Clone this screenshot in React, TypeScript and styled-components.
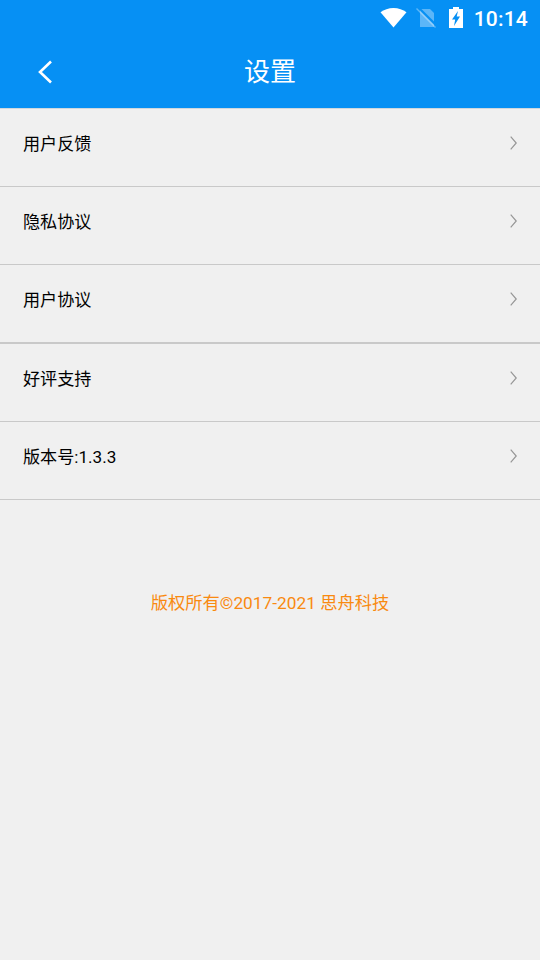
import styled, { createGlobalStyle } from "styled-components";

const GlobalStyle = createGlobalStyle`
  html, body {
    margin: 0;
    padding: 0;
    background: #f0f0f0;
  }
  * {
    box-sizing: border-box;
  }
`;

const Page = styled.div`
  width: 540px;
  height: 960px;
  overflow: hidden;
  background: #f0f0f0;
  font-family: Roboto, "Noto Sans CJK SC", sans-serif;
`;

const TopArea = styled.header`
  height: 109px;
  background: #0690f4;
  border-bottom: 1px solid #cfd8de;
  color: #fff;
`;

const StatusBar = styled.div`
  height: 36px;
  display: flex;
  align-items: center;
  justify-content: flex-end;
  padding-right: 12px;
`;

const Time = styled.span`
  margin-left: 11px;
  padding-top: 2px;
  font-size: 21px;
  font-weight: 500;
  letter-spacing: 0.2px;
`;

const WifiIcon = styled.svg`
  width: 27px;
  height: 20px;
  display: block;
`;

const SimIcon = styled.svg`
  width: 20px;
  height: 20px;
  margin-left: 9px;
  display: block;
`;

const BatteryIcon = styled.svg`
  width: 14px;
  height: 21px;
  margin: 0 0 2px 13px;
  display: block;
`;

const TitleBar = styled.div`
  height: 72px;
  display: grid;
  grid-template-columns: 90px 1fr 90px;
  align-items: center;
`;

const BackButton = styled.div`
  padding-left: 36px;
  display: flex;
  align-items: center;
`;

const Title = styled.h1`
  margin: 0 0 6px;
  text-align: center;
  font-size: 26px;
  font-weight: 400;
`;

const List = styled.div`
  display: flex;
  flex-direction: column;
`;

const Row = styled.div<{ $thick?: boolean }>`
  height: ${(p) => (p.$thick ? 79 : 78)}px;
  display: flex;
  align-items: center;
  justify-content: space-between;
  padding: 0 23px 10px 23px;
  border-bottom: ${(p) => (p.$thick ? 2 : 1)}px solid #c9c9c9;
  font-size: 17.1px;
  color: #000;
`;

const Chevron = styled.svg`
  width: 7px;
  height: 14px;
  display: block;
  fill: none;
  stroke: #969696;
  stroke-width: 1.2;
`;

const Copyright = styled.p`
  margin: 89px 0 0;
  text-align: center;
  font-size: 17.3px;
  color: #f98a10;
`;

const rows = ["用户反馈", "隐私协议", "用户协议", "好评支持", "版本号:1.3.3"];

export default function App() {
  return (
    <Page>
      <GlobalStyle />
      <TopArea>
        <StatusBar>
          <WifiIcon viewBox="0 0 27 20">
            <path d="M13.500 19.500 0.500 4.300C4 1.600 8.500 0 13.500 0s9.500 1.600 13 4.300z" fill="#fff" />
          </WifiIcon>
          <SimIcon viewBox="0 0 20 20">
            <path d="M4 1h10l4 4v14H4z" fill="#fff" fillOpacity="0.35" />
            <path d="M2.500 -0.500 21 18" stroke="#0690f4" strokeWidth="2" />
            <path d="M0.500 0.500 19.500 19.500" stroke="#fff" strokeOpacity="0.35" strokeWidth="1.400" />
          </SimIcon>
          <BatteryIcon viewBox="0 0 14 21">
            <path
              fillRule="evenodd"
              d="M4 0h6v2h4v19H0V2h4zM9 4 3 12.500h3.200L5 19l6-9.500H7.700z"
              fill="#fff"
            />
          </BatteryIcon>
          <Time>10:14</Time>
        </StatusBar>
        <TitleBar>
          <BackButton>
            <svg width="18" height="26" viewBox="0 0 18 26" fill="none" stroke="#fff" strokeWidth="2.6">
              <path d="M15 2.500 4 13l11 10.500" />
            </svg>
          </BackButton>
          <Title>设置</Title>
        </TitleBar>
      </TopArea>
      <List>
        {rows.map((label, i) => (
          <Row key={label} $thick={i === 2}>
            <span>{label}</span>
            <Chevron viewBox="0 0 7 14">
              <path d="M0.700 0.700 6.200 7l-5.500 6.300" />
            </Chevron>
          </Row>
        ))}
      </List>
      <Copyright>版权所有©2017-2021 思舟科技</Copyright>
    </Page>
  );
}
